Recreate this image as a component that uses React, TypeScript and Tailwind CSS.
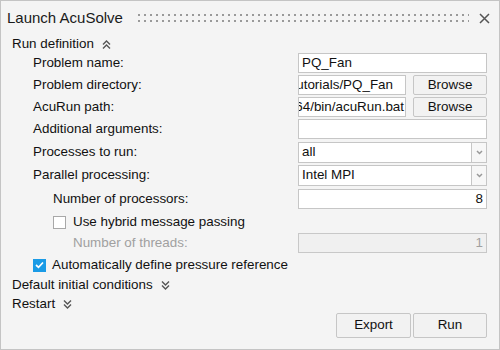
import React from 'react';

const FONT = { fontFamily: '"Liberation Sans", Arial, sans-serif' };

function DoubleChevron({ up }: { up?: boolean }) {
  return (
    <svg width="9" height="9" viewBox="0 0 9 9" className="ml-2 text-[#555]">
      <g fill="none" stroke="currentColor" strokeWidth="1.4" transform={up ? undefined : 'rotate(180 4.5 4.5)'}>
        <path d="M1 4.5 L4.5 1 L8 4.5" />
        <path d="M1 8.5 L4.5 5 L8 8.5" />
      </g>
    </svg>
  );
}

function TextBox({ children, right, pr }: { children?: React.ReactNode; right?: boolean; pr?: string }) {
  return (
    <div
      className={`h-[20px] flex-1 min-w-0 border border-[#c6c6c6] bg-white flex items-center overflow-hidden whitespace-nowrap text-[13.4px] text-[#111] ${right ? 'justify-end' : 'justify-start pl-[3px]'} ${pr ?? 'pr-[3px]'}`}
    >
      <span className="shrink-0">{children}</span>
    </div>
  );
}

function Button({ label, w }: { label: string; w: string }) {
  return (
    <div className={`${w} shrink-0 h-full border border-[#c6c6c6] rounded-[2px] bg-[#f2f2f2] flex items-center justify-center text-[13.4px] text-[#111]`}>
      {label}
    </div>
  );
}

function Select({ value }: { value: string }) {
  return (
    <div className="flex h-[21px] w-[189px]">
      <div className="flex-1 border border-[#c6c6c6] bg-white flex items-center pl-[3px] text-[13.4px] text-[#111]">{value}</div>
      <div className="w-[15px] border border-[#c6c6c6] border-l-0 bg-[#f7f7f7] flex items-center justify-center">
        <svg width="7" height="5" viewBox="0 0 7 5">
          <path d="M1 1 L3.5 3.5 L6 1" fill="none" stroke="#999" strokeWidth="1.5" />
        </svg>
      </div>
    </div>
  );
}

function Row({ label, h, indent = 'pl-[32px]', children, muted }: { label: React.ReactNode; h: string; indent?: string; children?: React.ReactNode; muted?: boolean }) {
  return (
    <div className={`${h} flex items-start shrink-0`}>
      <div className={`flex-1 ${indent} h-[20px] flex items-center text-[13.4px] ${muted ? 'text-[#a0a0a0]' : 'text-[#111]'}`}>{label}</div>
      <div className="w-[189px] min-w-0 mr-[12px] flex">{children}</div>
    </div>
  );
}

function Checkbox({ checked }: { checked?: boolean }) {
  return checked ? (
    <div className="w-[13px] h-[13px] bg-[#1a9be6] flex items-center justify-center">
      <svg width="9" height="8" viewBox="0 0 9 8">
        <path d="M1 4 L3.5 6.3 L8 1.5" fill="none" stroke="white" strokeWidth="1.7" />
      </svg>
    </div>
  ) : (
    <div className="w-[13px] h-[13px] border border-[#a8a8a8] bg-white" />
  );
}

export default function App() {
  return (
    <div className="w-[500px] h-[350px] bg-[#f4f4f4] border border-[#c4c4c4] flex flex-col overflow-hidden" style={FONT}>
      {/* Title bar */}
      <div className="h-[35px] flex items-center pl-[6px] pr-[9px] shrink-0">
        <span className="text-[15px] text-[#1a1a1a]">Launch AcuSolve</span>
        <svg className="ml-[15px] flex-1 h-[9px]" height="9">
          <defs>
            <pattern id="grip" width="6" height="6" patternUnits="userSpaceOnUse">
              <rect x="0" y="0" width="2" height="2" fill="#9a9a9a" />
            </pattern>
          </defs>
          <rect x="0" y="0" width="100%" height="9" fill="url(#grip)" />
        </svg>
        <svg width="11" height="11" viewBox="0 0 11 11" className="ml-[10px]">
          <path d="M1 1 L10 10 M10 1 L1 10" stroke="#555" strokeWidth="1.5" />
        </svg>
      </div>

      {/* Run definition */}
      <div className="h-[17px] flex items-center pl-[11px] text-[13.4px] text-[#111] shrink-0">
        Run definition
        <DoubleChevron up />
      </div>

      <Row label="Problem name:" h="h-[22px]">
        <TextBox>PQ_Fan</TextBox>
      </Row>
      <Row label="Problem directory:" h="h-[22px]">
        <div className="flex flex-1 min-w-0 gap-[7px] h-[20px]">
          <TextBox right pr="pr-[12px]">utorials/PQ_Fan</TextBox>
          <Button label="Browse" w="w-[74px]" />
        </div>
      </Row>
      <Row label="AcuRun path:" h="h-[22px]">
        <div className="flex flex-1 min-w-0 gap-[7px] h-[20px]">
          <TextBox right pr="pr-[1px]">64/bin/acuRun.bat</TextBox>
          <Button label="Browse" w="w-[74px]" />
        </div>
      </Row>
      <Row label="Additional arguments:" h="h-[23px]">
        <TextBox />
      </Row>
      <Row label="Processes to run:" h="h-[23px]">
        <Select value="all" />
      </Row>
      <Row label="Parallel processing:" h="h-[24px]">
        <Select value="Intel MPI" />
      </Row>
      <Row label="Number of processors:" h="h-[22px]" indent="pl-[52px]">
        <TextBox right>8</TextBox>
      </Row>
      <div className="h-[22px] flex items-center pl-[52px] gap-[7px] text-[13.4px] text-[#111] shrink-0">
        <Checkbox />
        Use hybrid message passing
      </div>
      <Row label="Number of threads:" h="h-[22px]" indent="pl-[72px]" muted>
        <div className="h-[20px] flex-1 border border-[#c8c8c8] bg-[#f0f0f0] flex items-center justify-end pr-[3px] text-[13.4px] text-[#a0a0a0]">1</div>
      </Row>
      <div className="h-[20px] flex items-center pl-[32px] gap-[6px] text-[13.4px] text-[#111] shrink-0">
        <Checkbox checked />
        Automatically define pressure reference
      </div>
      <div className="h-[20px] flex items-center pl-[11px] text-[13.4px] text-[#111] shrink-0">
        Default initial conditions
        <DoubleChevron />
      </div>
      <div className="h-[18px] flex items-center pl-[11px] text-[13.4px] text-[#111] shrink-0">
        Restart
        <DoubleChevron />
      </div>

      <div className="h-[25px] flex justify-end gap-[2px] pr-[12px] shrink-0">
        <Button label="Export" w="w-[75px]" />
        <Button label="Run" w="w-[74px]" />
      </div>
    </div>
  );
}
